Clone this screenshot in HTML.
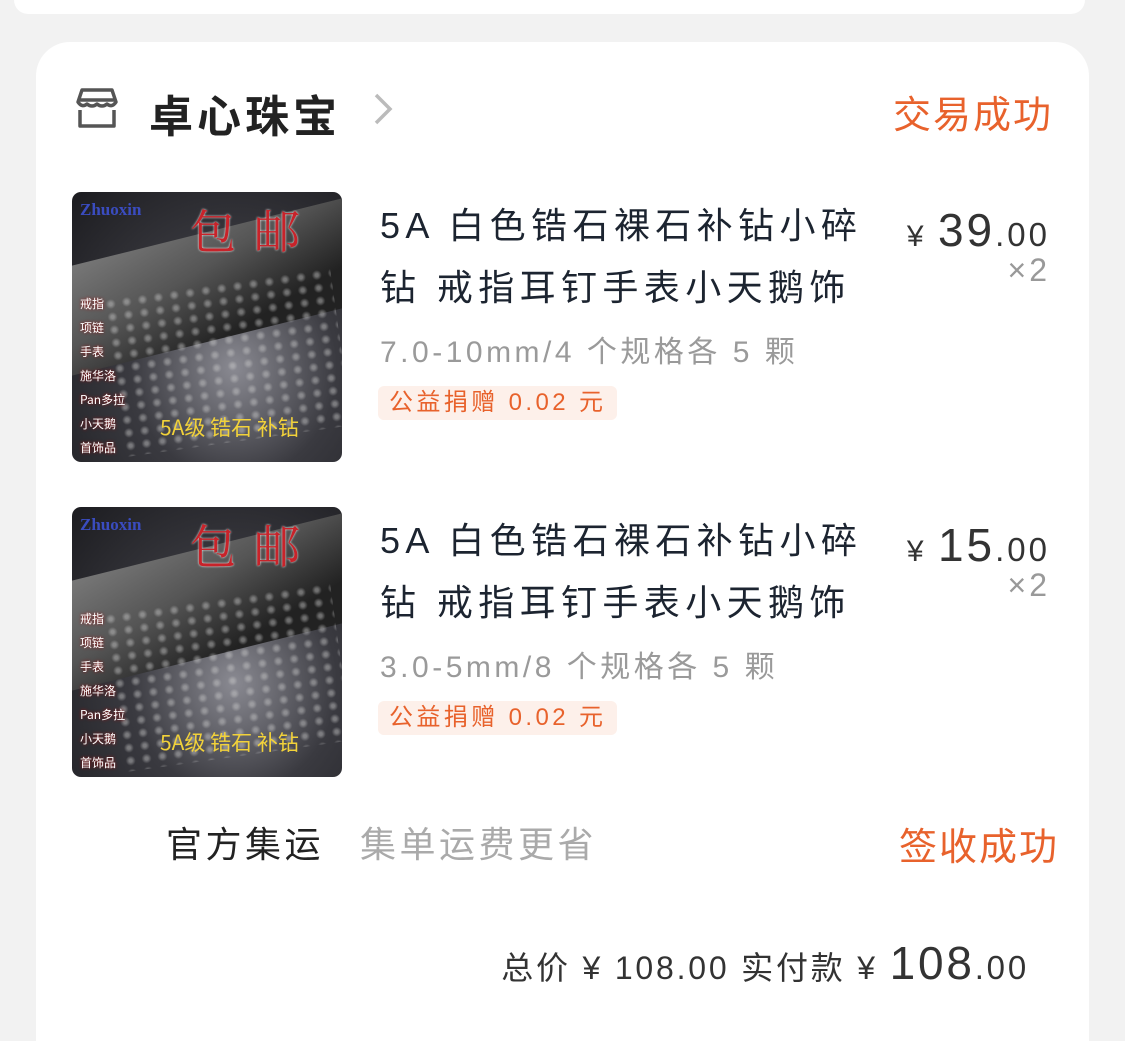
<!DOCTYPE html>
<html><head><meta charset="utf-8"><style>
*{margin:0;padding:0;box-sizing:border-box}
html,body{width:1125px;height:1041px;overflow:hidden}
body{background:#f2f2f2;position:relative;font-family:"Liberation Sans","Noto Sans CJK SC",sans-serif}
.top{position:absolute;left:14px;top:0;width:1071px;height:14px;background:#fff;border-radius:0 0 28px 28px}
.card{position:absolute;left:36px;top:42px;width:1053px;height:999px;background:#fff;border-radius:34px 34px 0 0}
.a{position:absolute;white-space:nowrap}
.img{position:absolute;left:72px;width:270px;height:270px;border-radius:9px;overflow:hidden;background:radial-gradient(ellipse at 60% 65%,#8a8a92 0%,#3a3a40 45%,#1c1c20 100%)}
.img .band{position:absolute;left:0;top:40px;width:270px;height:110px;background:linear-gradient(160deg,#777 0%,#555 40%,#222 80%);transform:skewY(-14deg)}
.img .logo{position:absolute;left:8px;top:8px;color:#3a4cc0;font:bold 17px "Liberation Serif",serif}
.img .by{position:absolute;left:118px;top:4px;color:#c8232a;font:46px "Noto Serif CJK SC",serif;letter-spacing:18px;text-shadow:0 0 2px #fff}
.img .side{position:absolute;left:8px;top:100px;color:#fff;font:12px "Noto Sans CJK SC",sans-serif;line-height:24px;text-shadow:0 0 3px #a01010}
.img .bot{position:absolute;left:88px;top:220px;color:#f2d23a;font:21px "Noto Sans CJK SC",sans-serif}
.dots{position:absolute;left:40px;top:90px;width:230px;height:160px;background:radial-gradient(circle,#ccc 1.5px,transparent 5px) 0 0/16px 13px;opacity:.45;transform:rotate(-8deg)}
.t{font-size:36px;color:#1c2430;line-height:62px;letter-spacing:5.4px}
.s{font-size:30px;color:#9a9a9a;letter-spacing:3.5px}
.tag{position:absolute;left:378px;height:34px;padding:0 11px;background:#fdf0ea;border-radius:6px;color:#e8622c;font-size:24px;line-height:34px;letter-spacing:3.4px}
.pr{position:absolute;right:75px;text-align:right;color:#333;letter-spacing:3px}
</style></head><body>
<div class="top"></div>
<div class="card"></div>
<svg class="a" style="left:74px;top:86px" width="46" height="44" viewBox="0 0 46 44" fill="none" stroke="#555" stroke-width="3.5" stroke-linejoin="round"><path d="M4 16 L8 4 H38 L42 16 Q38 22 33 18 Q28 22 23 18 Q18 22 13 18 Q8 22 4 16 Z"/><path d="M6 14 H40"/><path d="M6 24 V40 H40 V24"/></svg>
<div class="a" style="left:149px;top:81px;font-size:44px;font-weight:bold;color:#222;letter-spacing:4px">卓心珠宝</div>
<svg class="a" style="left:372px;top:92px" width="22" height="34" viewBox="0 0 22 34"><path d="M4 3 L18 17 L4 31" fill="none" stroke="#bbb" stroke-width="3.5"/></svg>
<div class="a" style="left:893px;top:84px;font-size:38px;color:#e8622c;letter-spacing:2px">交易成功</div>

<div class="img" style="top:192px"><div class="band"></div><div class="dots"></div><div class="logo">Zhuoxin</div><div class="by">包邮</div><div class="side">戒指<br>项链<br>手表<br>施华洛<br>Pan多拉<br>小天鹅<br>首饰品</div><div class="bot">5A级 锆石 补钻</div></div>
<div class="a t" style="left:380px;top:195px">5A 白色锆石裸石补钻小碎<br>钻 戒指耳钉手表小天鹅饰</div>
<div class="a s" style="left:380px;top:327px">7.0-10mm/4 个规格各 5 颗</div>
<div class="tag" style="top:386px">公益捐赠 0.02 元</div>
<div class="pr" style="top:203px"><span style="font-size:30px">¥ </span><span style="font-size:46px">39</span><span style="font-size:33px">.00</span></div>
<div class="pr" style="top:252px;color:#999;font-size:32px">×2</div>

<div class="img" style="top:507px"><div class="band"></div><div class="dots"></div><div class="logo">Zhuoxin</div><div class="by">包邮</div><div class="side">戒指<br>项链<br>手表<br>施华洛<br>Pan多拉<br>小天鹅<br>首饰品</div><div class="bot">5A级 锆石 补钻</div></div>
<div class="a t" style="left:380px;top:510px">5A 白色锆石裸石补钻小碎<br>钻 戒指耳钉手表小天鹅饰</div>
<div class="a s" style="left:380px;top:642px">3.0-5mm/8 个规格各 5 颗</div>
<div class="tag" style="top:701px">公益捐赠 0.02 元</div>
<div class="pr" style="top:518px"><span style="font-size:30px">¥ </span><span style="font-size:46px">15</span><span style="font-size:33px">.00</span></div>
<div class="pr" style="top:567px;color:#999;font-size:32px">×2</div>

<div class="a" style="left:166px;top:816px;font-size:36px;color:#222;letter-spacing:3.5px">官方集运</div>
<div class="a" style="left:360px;top:816px;font-size:36px;color:#aaa;letter-spacing:3.5px">集单运费更省</div>
<div class="a" style="left:899px;top:816px;font-size:38px;color:#e8622c;letter-spacing:2px">签收成功</div>

<div class="a" style="right:96px;top:936px;color:#333;letter-spacing:2.8px"><span style="font-size:32px">总价 ¥ 108.00 实付款 ¥ </span><span style="font-size:46px">108</span><span style="font-size:33px">.00</span></div>
</body></html>
